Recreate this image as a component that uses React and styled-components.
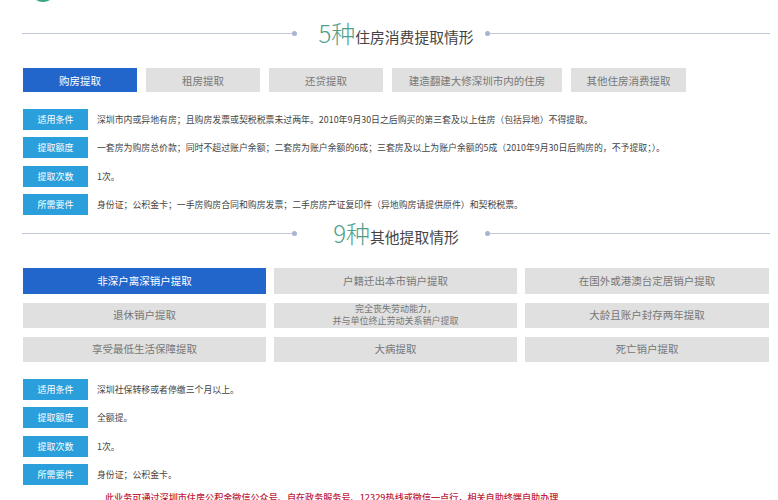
import React from 'react';
import styled, { createGlobalStyle } from 'styled-components';

const GlobalStyle = createGlobalStyle`
  html, body {
    margin: 0;
    padding: 0;
    height: 500px;
    overflow: hidden;
    background: #fff;
    font-family: "Noto Sans CJK SC", "Liberation Sans", sans-serif;
  }
`;

const Page = styled.div`
  width: 778px;
  height: 500px;
  overflow: hidden;
  padding: 0 9px 0 23px;
  box-sizing: border-box;
`;

const LogoStrip = styled.div`
  height: 2px;
  overflow: hidden;
  margin-left: 7px;
`;

const LogoCircle = styled.div`
  width: 26px;
  height: 26px;
  margin-top: -24px;
  border-radius: 50%;
  background: #37a585;
`;

const Heading = styled.div`
  display: grid;
  grid-template-columns: 274px 1fr 284px;
  align-items: center;
  height: 40px;
  margin: ${(p) => p.$top}px -1px 0;
`;

const Rule = styled.div`
  position: relative;
  height: 1px;
  top: -0.5px;
  background: #c3c8dc;

  &::after {
    content: '';
    position: absolute;
    top: -2px;
    ${(p) => (p.$side === 'left' ? 'right: -1px;' : 'left: -1px;')}
    width: 5px;
    height: 5px;
    border-radius: 50%;
    background: #a9b3d2;
  }
`;

const Title = styled.div`
  display: flex;
  align-items: flex-end;
  justify-content: center;
  padding-left: 10px;
  font-size: 14.8px;
  line-height: 24px;
  color: #444;
  white-space: nowrap;
`;

const Count = styled.span`
  font-size: 24px;
  line-height: 28px;
  font-weight: 300;
  color: #4f9f8c;
  margin-bottom: 2px;
`;

const Tabs = styled.div`
  display: flex;
  gap: 9px;
  margin-top: 14px;
`;

const Tab = styled.div`
  width: ${(p) => p.$width}px;
  height: 24px;
  display: flex;
  align-items: center;
  justify-content: center;
  font-size: 10.5px;
  color: ${(p) => (p.$active ? '#fff' : '#777')};
  background: ${(p) => (p.$active ? '#2266cc' : '#e0e0e0')};
`;

const TabGrid = styled.div`
  display: grid;
  grid-template-columns: 243px 243px 244px;
  grid-template-rows: 26px 25px 25px;
  gap: 9px 8px;
  margin-top: 14px;
`;

const GridTab = styled.div`
  display: flex;
  align-items: center;
  justify-content: center;
  text-align: center;
  font-size: ${(p) => (p.$small ? '9px' : '10.5px')};
  line-height: 12px;
  color: ${(p) => (p.$active ? '#fff' : '#777')};
  background: ${(p) => (p.$active ? '#2266cc' : '#e0e0e0')};
`;

const Rows = styled.div`
  display: grid;
  row-gap: 7.33px;
  margin-top: ${(p) => p.$top}px;
`;

const Row = styled.div`
  display: flex;
  align-items: center;
  height: 21px;
`;

const Label = styled.div`
  width: 65px;
  height: 100%;
  margin-right: 9px;
  display: flex;
  align-items: center;
  justify-content: center;
  font-size: 9px;
  color: #fff;
  background: #2a9fdc;
`;

const RowText = styled.div`
  font-size: 8.9px;
  color: #444;
  white-space: nowrap;
`;

const Notice = styled.div`
  margin: 5px 0 0 82px;
  font-size: 9.1px;
  line-height: 14px;
  font-weight: 500;
  color: #c0203a;
  white-space: nowrap;
`;

const purchaseTabs = [
  { text: '购房提取', width: 114, active: true },
  { text: '租房提取', width: 114 },
  { text: '还贷提取', width: 114 },
  { text: '建造翻建大修深圳市内的住房', width: 170 },
  { text: '其他住房消费提取', width: 115 },
];

const purchaseRows = [
  ['适用条件', '深圳市内或异地有房；且购房发票或契税税票未过两年。2010年9月30日之后购买的第三套及以上住房（包括异地）不得提取。'],
  ['提取额度', '一套房为购房总价款；同时不超过账户余额；二套房为账户余额的6成；三套房及以上为账户余额的5成（2010年9月30日后购房的，不予提取；）。'],
  ['提取次数', '1次。'],
  ['所需要件', '身份证；公积金卡；一手房购房合同和购房发票；二手房房产证复印件（异地购房请提供原件）和契税税票。'],
];

const otherTabs = [
  { text: '非深户离深销户提取', active: true },
  { text: '户籍迁出本市销户提取' },
  { text: '在国外或港澳台定居销户提取' },
  { text: '退休销户提取' },
  { text: <>完全丧失劳动能力，<br />并与单位终止劳动关系销户提取</>, small: true },
  { text: '大龄且账户封存两年提取' },
  { text: '享受最低生活保障提取' },
  { text: '大病提取' },
  { text: '死亡销户提取' },
];

const otherRows = [
  ['适用条件', '深圳社保转移或者停缴三个月以上。'],
  ['提取额度', '全额提。'],
  ['提取次数', '1次。'],
  ['所需要件', '身份证；公积金卡。'],
];

const SectionHeading = ({ top, count, children }) => (
  <Heading $top={top}>
    <Rule $side="left" />
    <Title><Count>{count}</Count>{children}</Title>
    <Rule $side="right" />
  </Heading>
);

const InfoRows = ({ top, rows }) => (
  <Rows $top={top}>
    {rows.map(([label, text]) => (
      <Row key={label}>
        <Label>{label}</Label>
        <RowText>{text}</RowText>
      </Row>
    ))}
  </Rows>
);

const App = () => (
  <Page>
    <GlobalStyle />
    <LogoStrip><LogoCircle /></LogoStrip>
    <SectionHeading top={12} count="5种">住房消费提取情形</SectionHeading>
    <Tabs>
      {purchaseTabs.map((t) => (
        <Tab key={t.text} $width={t.width} $active={t.active}>{t.text}</Tab>
      ))}
    </Tabs>
    <InfoRows top={17} rows={purchaseRows} />
    <SectionHeading top={-1} count="9种">其他提取情形</SectionHeading>
    <TabGrid>
      {otherTabs.map((t, i) => (
        <GridTab key={i} $active={t.active} $small={t.small}>{t.text}</GridTab>
      ))}
    </TabGrid>
    <InfoRows top={17} rows={otherRows} />
    <Notice>此业务可通过深圳市住房公积金微信公众号、自在政务服务号、12329热线或微信一点行，相关自助终端自助办理</Notice>
  </Page>
);

export default App;
